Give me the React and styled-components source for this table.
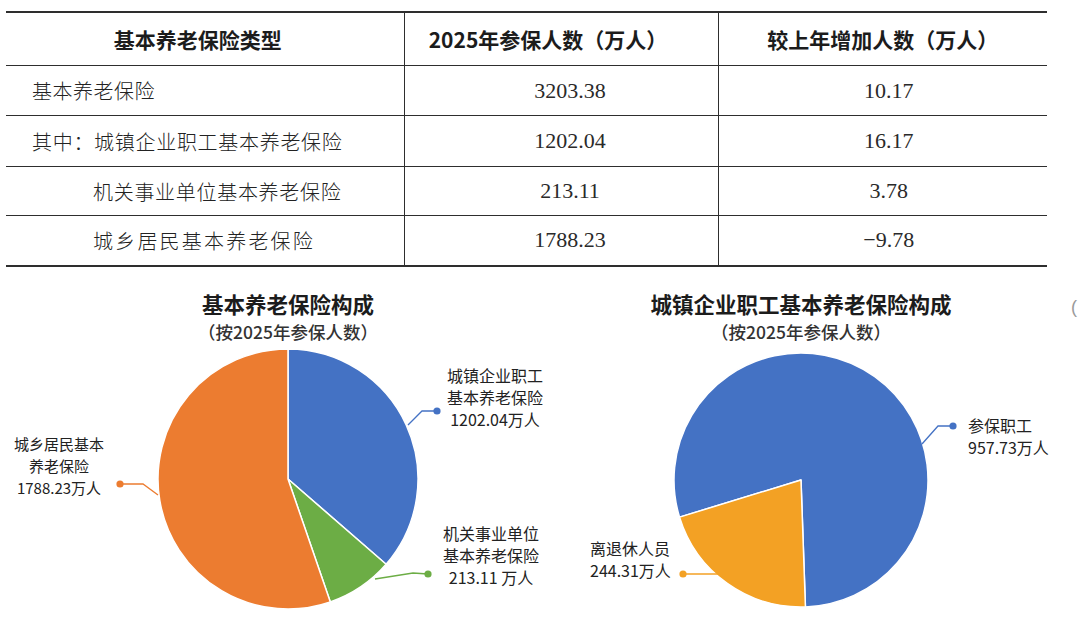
import React from "react";
import styled, { createGlobalStyle } from "styled-components";

const GlobalStyle = createGlobalStyle`
  html, body {
    margin: 0;
    padding: 0;
    background: #fff;
  }
  body {
    font-family: "Noto Sans CJK SC", "Noto Sans", sans-serif;
    color: #222;
  }
`;

const LINE = "#2e2e2e";

const rows = [
  { name: "基本养老保险", indent: 26, spacing: 0.5, total: "3203.38", delta: "10.17", h: 50 },
  { name: "其中：城镇企业职工基本养老保险", indent: 26, spacing: 0.7, total: "1202.04", delta: "16.17", h: 51 },
  { name: "机关事业单位基本养老保险", indent: 87, spacing: 0.7, total: "213.11", delta: "3.78", h: 49 },
  { name: "城乡居民基本养老保险", indent: 87, spacing: 2.2, total: "1788.23", delta: "−9.78", h: 50 },
];

const pieLeft = {
  cx: 288,
  cy: 477,
  r: 130,
  slices: [
    { from: 0, to: 131, color: "#4472c4" },
    { from: 131, to: 161, color: "#6cad45" },
    { from: 161, to: 360, color: "#ec7c30" },
  ],
  leaders: [
    { color: "#4472c4", points: "408,423 422,409 437,409", dot: [437, 409] },
    { color: "#6cad45", points: "375,577 413,571 428,572", dot: [428, 572] },
    { color: "#ec7c30", points: "158,493 143,482 120,482", dot: [120, 482] },
  ],
  labels: [
    { x: 495, y: 380, anchor: "middle", size: 16, lines: ["城镇企业职工", "基本养老保险", "1202.04万人"] },
    { x: 491, y: 538, anchor: "middle", size: 16, lines: ["机关事业单位", "基本养老保险", "213.11 万人"] },
    { x: 59, y: 448, anchor: "middle", size: 15, lines: ["城乡居民基本", "养老保险", "1788.23万人"] },
  ],
};

const pieRight = {
  cx: 801,
  cy: 478,
  r: 127,
  slices: [
    { from: 253, to: 538, color: "#4472c4" },
    { from: 178, to: 253, color: "#f3a124" },
  ],
  leaders: [
    { color: "#4472c4", points: "922,442 938,424 953,424", dot: [953, 424] },
    { color: "#f3a124", points: "718,572 683,572", dot: [683, 572] },
  ],
  labels: [
    { x: 968, y: 430, anchor: "start", size: 16, lines: ["参保职工", "957.73万人"] },
    { x: 590, y: 553, anchor: "start", size: 16, lines: ["离退休人员", "244.31万人"] },
  ],
};

const point = (cx, cy, r, deg) => {
  const a = (deg * Math.PI) / 180;
  return [cx + r * Math.sin(a), cy - r * Math.cos(a)];
};

const slicePath = (cx, cy, r, from, to) => {
  const [x0, y0] = point(cx, cy, r, from);
  const [x1, y1] = point(cx, cy, r, to);
  const large = to - from > 180 ? 1 : 0;
  return `M${cx} ${cy} L${x0} ${y0} A${r} ${r} 0 ${large} 1 ${x1} ${y1} Z`;
};

const Page = styled.div`
  width: 1080px;
  height: 635px;
  overflow: hidden;
  background: #fff;
`;

const Table = styled.table`
  margin: 11px 0 0 6px;
  width: 1041px;
  border-collapse: collapse;
  table-layout: fixed;
  border-top: 2px solid ${LINE};
  border-bottom: 2px solid ${LINE};
`;

const HeadCell = styled.th`
  height: 52px;
  padding: 0 ${({ $pr }) => $pr || 0}px 0 0;
  font-size: 21px;
  font-weight: 700;
  color: #1c1c1c;
  text-align: center;
  border-bottom: 1.5px solid ${LINE};
  border-left: ${({ $first }) => ($first ? "none" : `1.5px solid ${LINE}`)};
`;

const BodyRow = styled.tr`
  height: ${({ $h }) => $h}px;
  border-bottom: 1.5px solid ${LINE};
  &:last-child {
    border-bottom: none;
  }
`;

const NameCell = styled.td`
  padding: 0 0 0 ${({ $indent }) => $indent}px;
  font-size: 20px;
  font-weight: 300;
  letter-spacing: ${({ $spacing }) => $spacing}px;
  color: #222;
  white-space: nowrap;
`;

const NumCell = styled.td`
  padding: 0 0 0 ${({ $shift }) => $shift}px;
  text-align: center;
  font-family: "Liberation Serif", "Times New Roman", serif;
  font-size: 22px;
  color: #2a2a2a;
  border-left: 1.5px solid ${LINE};
`;

const ChartRow = styled.div`
  position: relative;
  display: flex;
  margin-top: 23px;
`;

const Panel = styled.div`
  width: ${({ $w }) => $w}px;
  flex: none;
  display: flex;
  flex-direction: column;
  align-items: center;
`;

const ChartTitle = styled.div`
  font-size: 21.5px;
  font-weight: 700;
  line-height: 28px;
  color: #1c1c1c;
  white-space: nowrap;
`;

const ChartSub = styled.div`
  margin-top: 3px;
  font-size: 17.5px;
  font-weight: 500;
  line-height: 22px;
  color: #333;
  white-space: nowrap;
`;

const PieSvg = styled.svg`
  display: block;
  flex: none;
  overflow: visible;
`;

const LabelText = styled.text`
  font-family: "Noto Sans CJK SC", "Noto Sans", sans-serif;
  font-size: ${({ $size }) => $size}px;
  fill: #222;
`;

const Stray = styled.span`
  position: absolute;
  left: 1071px;
  top: 7px;
  font-family: "Liberation Sans", sans-serif;
  font-size: 18px;
  line-height: 20px;
  color: #9a9a9a;
`;

const Pie = ({ data, x, width }) => (
  <PieSvg width={width} height={294} viewBox={`${x} 341 ${width} 294`}>
    {data.slices.map((s) => (
      <path
        key={s.from}
        d={slicePath(data.cx, data.cy, data.r, s.from, s.to)}
        fill={s.color}
        stroke="#fff"
        strokeWidth="1.5"
        strokeLinejoin="round"
      />
    ))}
    {data.leaders.map((l) => (
      <g key={l.points}>
        <polyline points={l.points} fill="none" stroke={l.color} strokeWidth="1.3" />
        <circle cx={l.dot[0]} cy={l.dot[1]} r="3.6" fill={l.color} />
      </g>
    ))}
    {data.labels.map((lab) => (
      <LabelText key={lab.lines[0]} x={lab.x} y={lab.y} textAnchor={lab.anchor} $size={lab.size}>
        {lab.lines.map((line, i) => (
          <tspan key={line} x={lab.x} dy={i === 0 ? 0 : 22}>
            {line}
          </tspan>
        ))}
      </LabelText>
    ))}
  </PieSvg>
);

const App = () => (
  <Page>
    <GlobalStyle />
    <Table>
      <colgroup>
        <col style={{ width: 398 }} />
        <col style={{ width: 314 }} />
        <col style={{ width: 329 }} />
      </colgroup>
      <thead>
        <tr>
          <HeadCell $first $pr={14}>基本养老保险类型</HeadCell>
          <HeadCell $pr={26}>2025年参保人数（万人）</HeadCell>
          <HeadCell $pr={0}>较上年增加人数（万人）</HeadCell>
        </tr>
      </thead>
      <tbody>
        {rows.map((r) => (
          <BodyRow key={r.name} $h={r.h}>
            <NameCell $indent={r.indent} $spacing={r.spacing}>{r.name}</NameCell>
            <NumCell $shift={18}>{r.total}</NumCell>
            <NumCell $shift={12}>{r.delta}</NumCell>
          </BodyRow>
        ))}
      </tbody>
    </Table>

    <ChartRow>
      <Panel $w={576}>
        <ChartTitle>基本养老保险构成</ChartTitle>
        <ChartSub>（按2025年参保人数）</ChartSub>
        <Pie data={pieLeft} x={0} width={576} />
      </Panel>
      <Panel $w={450}>
        <ChartTitle>城镇企业职工基本养老保险构成</ChartTitle>
        <ChartSub>（按2025年参保人数）</ChartSub>
        <Pie data={pieRight} x={576} width={450} />
      </Panel>
      <Stray>(</Stray>
    </ChartRow>
  </Page>
);

export default App;
